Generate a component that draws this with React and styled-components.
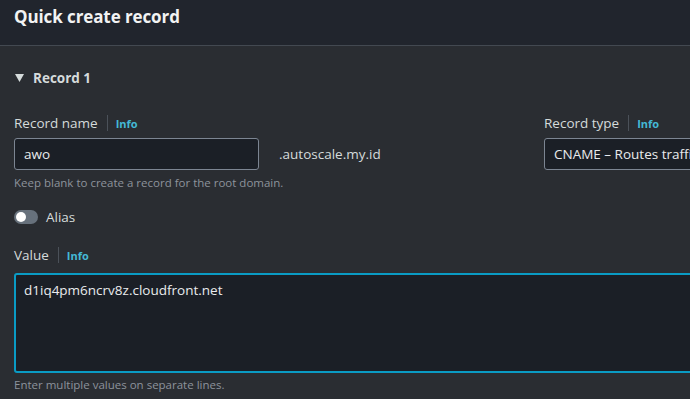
import React from "react";
import styled, { createGlobalStyle } from "styled-components";

const Global = createGlobalStyle`
  html, body { margin: 0; padding: 0; background: #2a2d32; overflow: hidden; }
  body { font-family: "Open Sans", "Noto Sans", "Liberation Sans", sans-serif; color: #e9ebed; }
  * { box-sizing: border-box; }
`;

const Page = styled.div`
  width: 690px;
  height: 399px;
  overflow: hidden;
  background: #2a2d32;
`;

const Header = styled.header`
  height: 46px;
  background: #21252d;
  border-bottom: 1px solid #434951;
  padding: 0 14px;
  display: flex;
  align-items: center;
`;

const Title = styled.h1`
  margin: 0;
  margin-top: -12px;
  font-size: 17px;
  font-weight: 700;
  color: #f2f3f3;
  letter-spacing: -0.1px;
`;

const Body = styled.div`
  width: 960px;
  padding: 22px 14px 0 14px;
`;

const Expander = styled.div`
  display: flex;
  align-items: center;
  gap: 9px;
  height: 20px;
  font-size: 13.5px;
  font-weight: 700;
  color: #d5dbdb;
`;

const Caret = styled.svg`
  width: 9px;
  height: 8px;
  margin-left: 1px;
`;

const Grid = styled.div`
  margin-top: 25px;
  display: grid;
  grid-template-columns: 516px 400px;
  column-gap: 14px;
`;

const Field = styled.div`
  display: flex;
  flex-direction: column;
`;

const LabelRow = styled.div`
  display: flex;
  align-items: center;
  height: 20px;
  font-size: 13.5px;
  color: #d5dbdb;
`;

const Divider = styled.span`
  width: 1px;
  height: 16px;
  background: #4b5159;
  margin: 0 8px 0 9px;
`;

const Info = styled.span`
  color: #44b9d6;
  font-weight: 700;
  font-size: 11px;
  margin-top: 1px;
`;

const InputRow = styled.div`
  display: flex;
  align-items: center;
  gap: 20px;
  margin-top: 5px;
`;

const Box = styled.div`
  width: ${(p) => p.$w || "auto"};
  height: 32px;
  background: #1b1f26;
  border: 1px solid #7c8592;
  border-radius: 3px;
  display: flex;
  align-items: center;
  padding: 0 9px;
  font-size: 13.5px;
  color: #e9ebed;
  white-space: nowrap;
  overflow: hidden;
`;

const Suffix = styled.span`
  font-size: 13.5px;
  color: #d5dbdb;
`;

const Hint = styled.div`
  font-size: 11.5px;
  color: #8d939c;
  margin-top: ${(p) => p.$mt || "5px"};
`;

const ToggleRow = styled.div`
  display: flex;
  align-items: center;
  gap: 8px;
  margin-top: 18px;
  font-size: 13.5px;
  color: #d5dbdb;
`;

const Track = styled.span`
  width: 24px;
  height: 14px;
  border-radius: 7px;
  background: #67717c;
  position: relative;
`;

const Knob = styled.span`
  position: absolute;
  left: 2px;
  top: 2px;
  width: 10px;
  height: 10px;
  border-radius: 50%;
  background: #ffffff;
`;

const ValueField = styled.div`
  margin-top: 19px;
`;

const TextArea = styled.div`
  margin-top: 8px;
  height: 100px;
  width: 920px;
  background: #1b1f26;
  border: 2px solid #0a9bc4;
  border-radius: 3px;
  padding: 6px 8px;
  font-size: 13.5px;
  color: #e9ebed;
`;

export default function App() {
  return (
    <Page>
      <Global />
      <Header>
        <Title>Quick create record</Title>
      </Header>
      <Body>
        <Expander>
          <Caret viewBox="0 0 9 8">
            <path d="M0 0 H9 L4.5 8 Z" fill="#d5dbdb" />
          </Caret>
          Record 1
        </Expander>
        <Grid>
          <Field>
            <LabelRow>
              Record name<Divider />
              <Info>Info</Info>
            </LabelRow>
            <InputRow>
              <Box $w="245px">awo</Box>
              <Suffix>.autoscale.my.id</Suffix>
            </InputRow>
            <Hint>Keep blank to create a record for the root domain.</Hint>
          </Field>
          <Field>
            <LabelRow>
              Record type<Divider />
              <Info>Info</Info>
            </LabelRow>
            <InputRow>
              <Box $w="380px">CNAME – Routes traffic to another domain name</Box>
            </InputRow>
          </Field>
        </Grid>
        <ToggleRow>
          <Track>
            <Knob />
          </Track>
          Alias
        </ToggleRow>
        <ValueField>
          <LabelRow>
            Value<Divider />
            <Info>Info</Info>
          </LabelRow>
          <TextArea>d1iq4pm6ncrv8z.cloudfront.net</TextArea>
          <Hint $mt="4px">Enter multiple values on separate lines.</Hint>
        </ValueField>
      </Body>
    </Page>
  );
}
